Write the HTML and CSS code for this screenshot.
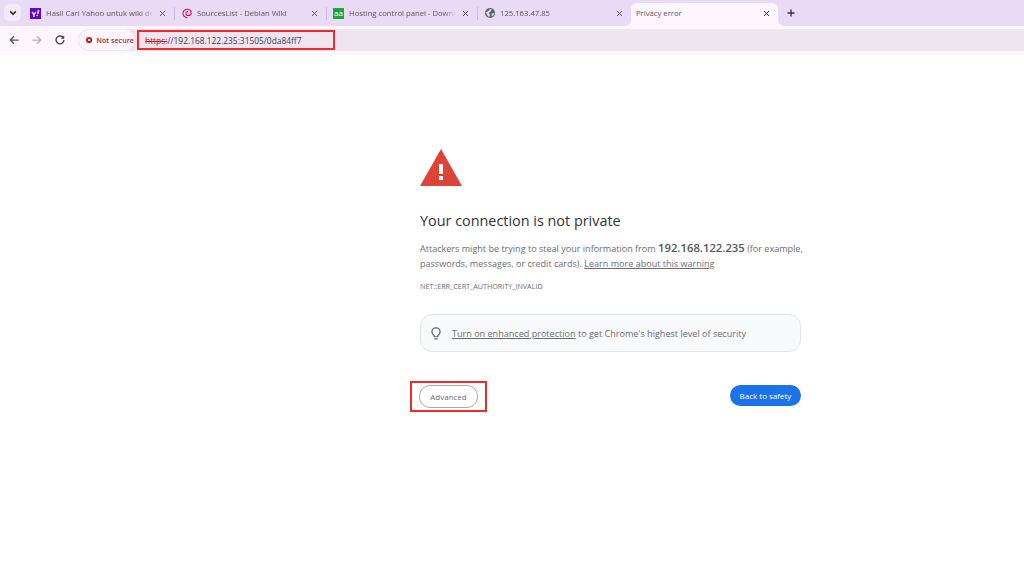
FILE: index.html
```html
<!DOCTYPE html>
<html>
<head>
    <title>Privacy error</title>
    <link rel="stylesheet" href="styles.css">
</head>
<body>
    <div class="tabstrip">
        <div class="tab-search">
            <svg width="8" height="8" viewBox="0 0 10 10"><path d="M1.5 3 5 6.5 8.5 3" fill="none" stroke="#2a2530" stroke-width="2"/></svg>
        </div>
        <div class="tab tab-1">
            <svg class="favicon" width="11" height="11" viewBox="0 0 14 14"><rect width="14" height="14" fill="#5f01d1"/><path d="M2.6 5 5 8.6V11.4M7.4 5 5 8.6" fill="none" stroke="#fff" stroke-width="1.6"/><path d="M11 2.6 9.8 7.4" stroke="#fff" stroke-width="1.8"/><circle cx="9.2" cy="9.4" r="1" fill="#fff"/></svg>
            <span class="tab-title">Hasil Cari Yahoo untuk wiki debian</span>
            <svg class="tab-close" width="7" height="7" viewBox="0 0 7 7"><path d="M1 1 6 6M6 1 1 6" stroke="#5a5560" stroke-width="1"/></svg>
        </div>
        <div class="tab-sep"></div>
        <div class="tab tab-2">
            <svg class="favicon" width="10" height="11" viewBox="0 0 14 14"><path d="M7.6 13.2C3.6 12.2 1.4 10 1.4 6.8 1.4 3.4 4 1 7.4 1 10.4 1 12.8 3 12.8 5.8 12.8 8.2 11 9.8 8.8 9.8 6.8 9.8 5.4 8.2 5.6 6.4 5.8 5 7.2 4 8.6 4.6" fill="none" stroke="#d70751" stroke-width="1.5"/></svg>
            <span class="tab-title">SourcesList - Debian Wiki</span>
            <svg class="tab-close" width="7" height="7" viewBox="0 0 7 7"><path d="M1 1 6 6M6 1 1 6" stroke="#5a5560" stroke-width="1"/></svg>
        </div>
        <div class="tab-sep"></div>
        <div class="tab tab-3">
            <span class="favicon-text">aa</span>
            <span class="tab-title">Hosting control panel - Download</span>
            <svg class="tab-close" width="7" height="7" viewBox="0 0 7 7"><path d="M1 1 6 6M6 1 1 6" stroke="#5a5560" stroke-width="1"/></svg>
        </div>
        <div class="tab-sep"></div>
        <div class="tab tab-4">
            <svg class="favicon" width="10" height="10" viewBox="0 0 12 12"><circle cx="6" cy="6" r="6" fill="#5f6368"/><path d="M1 5 4 4 5.5 1.5 8 1.5 7 4 4.5 6 6 8.5 5 11 3 9ZM8 6.5 11 6 10 9 8 10Z" fill="#e9daf5"/></svg>
            <span class="tab-title">125.163.47.85</span>
            <svg class="tab-close" width="7" height="7" viewBox="0 0 7 7"><path d="M1 1 6 6M6 1 1 6" stroke="#5a5560" stroke-width="1"/></svg>
        </div>
        <div class="tab tab-active">
            <span class="tab-title">Privacy error</span>
            <svg class="tab-close" width="7" height="7" viewBox="0 0 7 7"><path d="M1 1 6 6M6 1 1 6" stroke="#3a3540" stroke-width="1"/></svg>
        </div>
        <div class="new-tab">
            <svg width="10" height="10" viewBox="0 0 10 10"><path d="M5 1.5V8.5M1.5 5H8.5" stroke="#3a3540" stroke-width="1.4"/></svg>
        </div>
    </div>

    <div class="toolbar">
        <svg class="nav-icon" width="10" height="10" viewBox="0 0 12 12"><path d="M11.5 6H1.5M6 1.5 1.5 6 6 10.5" fill="none" stroke="#55505a" stroke-width="1.5"/></svg>
        <svg class="nav-icon" width="10" height="10" viewBox="0 0 12 12"><path d="M.5 6H10.5M6 1.5 10.5 6 6 10.5" fill="none" stroke="#b4afb8" stroke-width="1.5"/></svg>
        <svg class="nav-icon" width="10" height="10" viewBox="0 0 12 12"><path d="M10 3.4A4.7 4.7 0 1 0 10.7 6" fill="none" stroke="#45404a" stroke-width="1.6"/><path d="M11 .6V4.6H7Z" fill="#45404a"/></svg>
        <div class="omnibox">
            <div class="security-chip">
                <svg width="8" height="8" viewBox="0 0 9 9"><circle cx="4.5" cy="4.5" r="4.5" fill="#b3261e"/><path d="M3 3 6 6M6 3 3 6" stroke="#fff" stroke-width="1.2"/></svg>
                <span>Not secure</span>
            </div>
            <div class="url-box">
                <span class="url-scheme">https:</span><span>//192.168.122.235:31505/0da84ff7</span>
            </div>
        </div>
    </div>

    <div class="interstitial">
        <svg class="warning-icon" width="42" height="37" viewBox="0 0 42 37">
            <path d="M21 0 42 37H0Z" fill="#db4437"/>
            <path d="M19 15H23V25H19ZM19 27H23V31H19Z" fill="#fff"/>
        </svg>
        <h1>Your connection is not private</h1>
        <p class="message">Attackers might be trying to steal your information from <b>192.168.122.235</b> (for example, passwords, messages, or credit cards). <a href="#">Learn more about this warning</a></p>
        <div class="error-code">NET::ERR_CERT_AUTHORITY_INVALID</div>
        <div class="protection-box">
            <svg width="10" height="13" viewBox="0 0 12 16"><path d="M3.8 10.6C2.4 9.7 1 8.4 1 6 1 3.2 3.2 1 6 1 8.8 1 11 3.2 11 6 11 8.4 9.6 9.7 8.2 10.6V12H3.8ZM4 14.6H8" fill="none" stroke="#5f6368" stroke-width="1.5"/></svg>
            <span><a href="#">Turn on enhanced protection</a> to get Chrome's highest level of security</span>
        </div>
        <div class="actions">
            <div class="advanced-mark">
                <button class="btn-advanced">Advanced</button>
            </div>
            <button class="btn-safety">Back to safety</button>
        </div>
    </div>
</body>
</html>
```

FILE: styles.css
```css
html, body {
    margin: 0;
    padding: 0;
    height: 576px;
    overflow: hidden;
}
body {
    font-family: "Open Sans", "Noto Sans", sans-serif;
    background-color: white;
    color: #6a6e73;
}
.tabstrip {
    display: flex;
    align-items: center;
    height: 26px;
    background-color: #e9daf5;
    padding-left: 4px;
    box-sizing: border-box;
}
.tab-search {
    display: flex;
    align-items: center;
    justify-content: center;
    width: 17px;
    height: 17px;
    margin-bottom: 1px;
    border-radius: 5px;
    background-color: #f3e9f9;
}
.tab {
    display: flex;
    align-items: center;
    flex-shrink: 0;
    height: 26px;
    font-size: 7.7px;
    color: #5a5560;
    box-sizing: border-box;
}
.tab-1 { width: 153px; padding-left: 9px; }
.tab-2 { width: 151px; padding-left: 7px; }
.tab-3 { width: 150px; padding-left: 6px; }
.tab-4 { width: 153px; padding-left: 7px; }
.favicon { flex-shrink: 0; }
.favicon-text {
    flex-shrink: 0;
    width: 11px;
    height: 11px;
    background-color: #18a83c;
    color: white;
    font-size: 8px;
    line-height: 10px;
    text-align: center;
}
.tab-title {
    flex: 1;
    margin: 0 6px 0 5px;
    white-space: nowrap;
    overflow: hidden;
    -webkit-mask-image: linear-gradient(to left, transparent, black 12px);
    mask-image: linear-gradient(to left, transparent, black 12px);
}
.tab-close {
    flex-shrink: 0;
    margin-right: 8px;
}
.tab-sep {
    flex-shrink: 0;
    width: 1px;
    height: 13px;
    background-color: #cdbde0;
}
.tab-active {
    position: relative;
    width: 147px;
    height: 23px;
    margin-top: 3px;
    padding: 0 0 3px 5px;
    background-color: #fdf6fe;
    border-radius: 6px 6px 0 0;
}
.tab-active .tab-title {
    margin-left: 0;
    -webkit-mask-image: none;
    mask-image: none;
}
.tab-active::before, .tab-active::after {
    content: "";
    position: absolute;
    bottom: 0;
    width: 6px;
    height: 6px;
}
.tab-active::before {
    left: -6px;
    background: radial-gradient(circle at 0 0, transparent 6px, #fdf6fe 6px);
}
.tab-active::after {
    right: -6px;
    background: radial-gradient(circle at 100% 0, transparent 6px, #fdf6fe 6px);
}
.new-tab {
    display: flex;
    margin-left: 8px;
}
.toolbar {
    display: flex;
    align-items: center;
    height: 22px;
    padding: 3px 0 4px 9px;
    background-color: #fdf6fe;
}
.nav-icon {
    flex-shrink: 0;
    margin-right: 13px;
}
.omnibox {
    display: flex;
    align-items: center;
    flex: 1;
    height: 22px;
    background-color: #eee5f1;
    border-radius: 11px 0 0 11px;
}
.security-chip {
    display: flex;
    align-items: center;
    flex-shrink: 0;
    gap: 4px;
    box-sizing: border-box;
    width: 57px;
    height: 22px;
    padding-left: 7px;
    background-color: #fdf6fe;
    border: 1px solid #f0e8f3;
    border-radius: 11px;
    font-size: 7.2px;
    font-weight: 600;
    color: #b3261e;
    white-space: nowrap;
}
.url-box {
    display: flex;
    align-items: center;
    box-sizing: border-box;
    width: 198px;
    height: 20px;
    margin-left: 2px;
    padding-left: 6px;
    border: 2px solid #ee2b2b;
    font-size: 8.4px;
    color: #45404a;
}
.url-scheme {
    color: #b3261e;
    text-decoration: line-through;
}
.interstitial {
    width: 381px;
    margin-left: 420px;
    padding-top: 94px;
}
.warning-icon { display: block; }
h1 {
    margin: 25px 0 0;
    font-size: 14.4px;
    font-weight: 400;
    line-height: 20px;
    color: #333438;
}
.message {
    margin: 10px -6px 0 0;
    font-size: 9.05px;
    line-height: 15px;
}
.message b {
    font-size: 11.3px;
    line-height: 11px;
    font-weight: 600;
    color: #55585d;
}
.message a, .protection-box a { color: #6a6e73; }
.error-code {
    margin-top: 9px;
    font-size: 7.2px;
    line-height: 12px;
}
.protection-box {
    display: flex;
    align-items: center;
    gap: 11px;
    height: 38px;
    margin-top: 22px;
    padding-left: 10px;
    box-sizing: border-box;
    background-color: #f8f9fa;
    border: 1px solid #e1e3e6;
    border-radius: 12px;
    font-size: 9.07px;
}
.actions {
    display: flex;
    align-items: center;
    justify-content: space-between;
    margin-top: 29px;
}
.advanced-mark {
    display: flex;
    align-items: center;
    justify-content: center;
    box-sizing: border-box;
    width: 77px;
    height: 31px;
    margin-left: -10px;
    border: 2px solid #ee2b2b;
}
button {
    font-family: inherit;
    font-size: 8px;
    border-radius: 11px;
    padding: 0;
}
.btn-advanced {
    width: 59px;
    height: 23px;
    background-color: white;
    border: 1px solid #a8a8a8;
    color: #6a6e73;
}
.btn-safety {
    width: 71px;
    height: 21px;
    margin-bottom: 2px;
    background-color: #1a73e8;
    border: none;
    color: white;
}
```
